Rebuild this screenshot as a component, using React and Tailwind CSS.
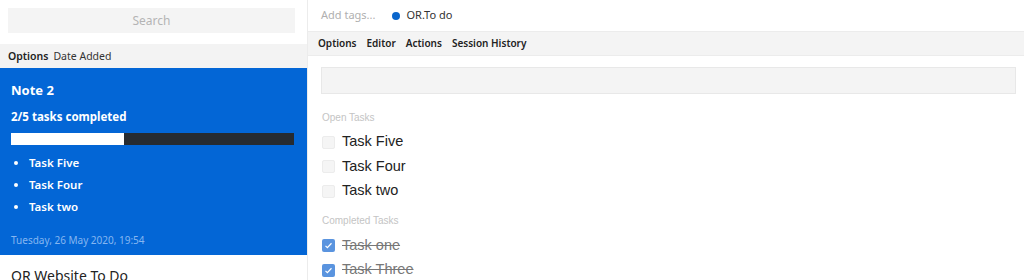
import React from "react"

const openTasks = ["Task Five", "Task Four", "Task two"]
const doneTasks = ["Task one", "Task Three"]

const Check = ({ done }) =>
  done ? (
    <span className="flex h-[13px] w-[13px] items-center justify-center rounded-[2px] bg-[#5a94df]">
      <svg viewBox="0 0 12 12" className="h-[9px] w-[9px]" fill="none">
        <path d="M2 6.5l2.5 2.5L10 3" stroke="white" strokeWidth="1.6" />
      </svg>
    </span>
  ) : (
    <span className="block h-[13px] w-[13px] rounded-[2px] border border-[#ececec] bg-[#f5f5f5]" />
  )

const Sidebar = () => {
  return (
    <div className="w-[308px] shrink-0 border-r border-[#ececec] bg-white font-['Noto_Sans',sans-serif]">
      <div className="px-2 pt-[8px] pb-[11px] pr-[12px]">
        <div className="flex h-[25px] items-center justify-center bg-[#f4f4f4] text-[12px] text-[#b4b4b4]">
          Search
        </div>
      </div>
      <div className="flex h-[24px] items-center gap-[5px] bg-[#f3f3f3] px-2 pt-[1px] text-[10.5px] text-[#333]">
        <span className="font-semibold text-[#222]">Options</span>
        <span>Date Added</span>
      </div>
      <div className="bg-[#0366d6] px-[11px] pt-[12px] pb-[8px] text-white">
        <div className="text-[13px] font-bold leading-[20px]">Note 2</div>
        <div className="mt-[8px] text-[11.5px] font-bold leading-[18px]">2/5 tasks completed</div>
        <div className="mt-[7px] flex h-[12px] w-[283px] bg-[#262b31]">
          <div className="h-full w-[113px] bg-white" />
        </div>
        <ul className="mt-[7px] flex flex-col text-[11.5px] font-semibold leading-[22px]">
          {openTasks.map((t) => (
            <li key={t} className="flex items-center">
              <span className="ml-[3px] mr-[11px] h-[4px] w-[4px] rounded-full bg-white" />
              {t}
            </li>
          ))}
        </ul>
        <div className="mt-[15px] text-[10px] leading-[14px] text-[#86b6f0]">
          Tuesday, 26 May 2020, 19:54
        </div>
      </div>
      <div className="px-[11px] pt-[10px] text-[14px] text-[#222]">OR Website To Do</div>
    </div>
  )
}

const Editor = () => {
  return (
    <div className="flex-1 bg-white">
      <div className="flex h-[31px] items-center gap-[17px] px-[13px] font-['Noto_Sans',sans-serif] text-[11px]">
        <span className="text-[#b0b0b0]">Add tags...</span>
        <span className="flex items-center gap-[6px] text-[#333]">
          <span className="h-[8px] w-[8px] rounded-full bg-[#0a66cc]" />
          OR.To do
        </span>
      </div>
      <div className="flex h-[25px] items-center gap-[10px] border-y border-[#ececec] bg-[#f4f4f4] px-[10px] font-['Noto_Sans',sans-serif] text-[10px] font-semibold text-[#222]">
        <span>Options</span>
        <span>Editor</span>
        <span>Actions</span>
        <span>Session History</span>
      </div>
      <div className="px-[13px] pr-[8px] pt-[11px]">
        <div className="h-[27px] border border-[#e8e8e8] bg-[#f4f4f4]" />
      </div>
      <div className="px-[14px] pt-[16px] font-['Liberation_Sans',Arial,sans-serif]">
        <div className="text-[10px] leading-[16px] text-[#c4c4c4]">Open Tasks</div>
        <div className="mt-[4px] flex flex-col">
          {openTasks.map((t) => (
            <div key={t} className="flex h-[24.5px] items-center gap-[7px] text-[14.5px] text-[#222]">
              <Check done={false} />
              {t}
            </div>
          ))}
        </div>
        <div className="mt-[9px] text-[10px] leading-[16px] text-[#c4c4c4]">Completed Tasks</div>
        <div className="mt-[5px] flex flex-col">
          {doneTasks.map((t) => (
            <div key={t} className="flex h-[24.5px] items-center gap-[7px] text-[14.5px] text-[#777] line-through">
              <Check done />
              {t}
            </div>
          ))}
        </div>
      </div>
    </div>
  )
}

export default function App() {
  return (
    <div className="flex h-[280px] w-[1024px] items-start overflow-hidden bg-white">
      <Sidebar />
      <Editor />
    </div>
  )
}
